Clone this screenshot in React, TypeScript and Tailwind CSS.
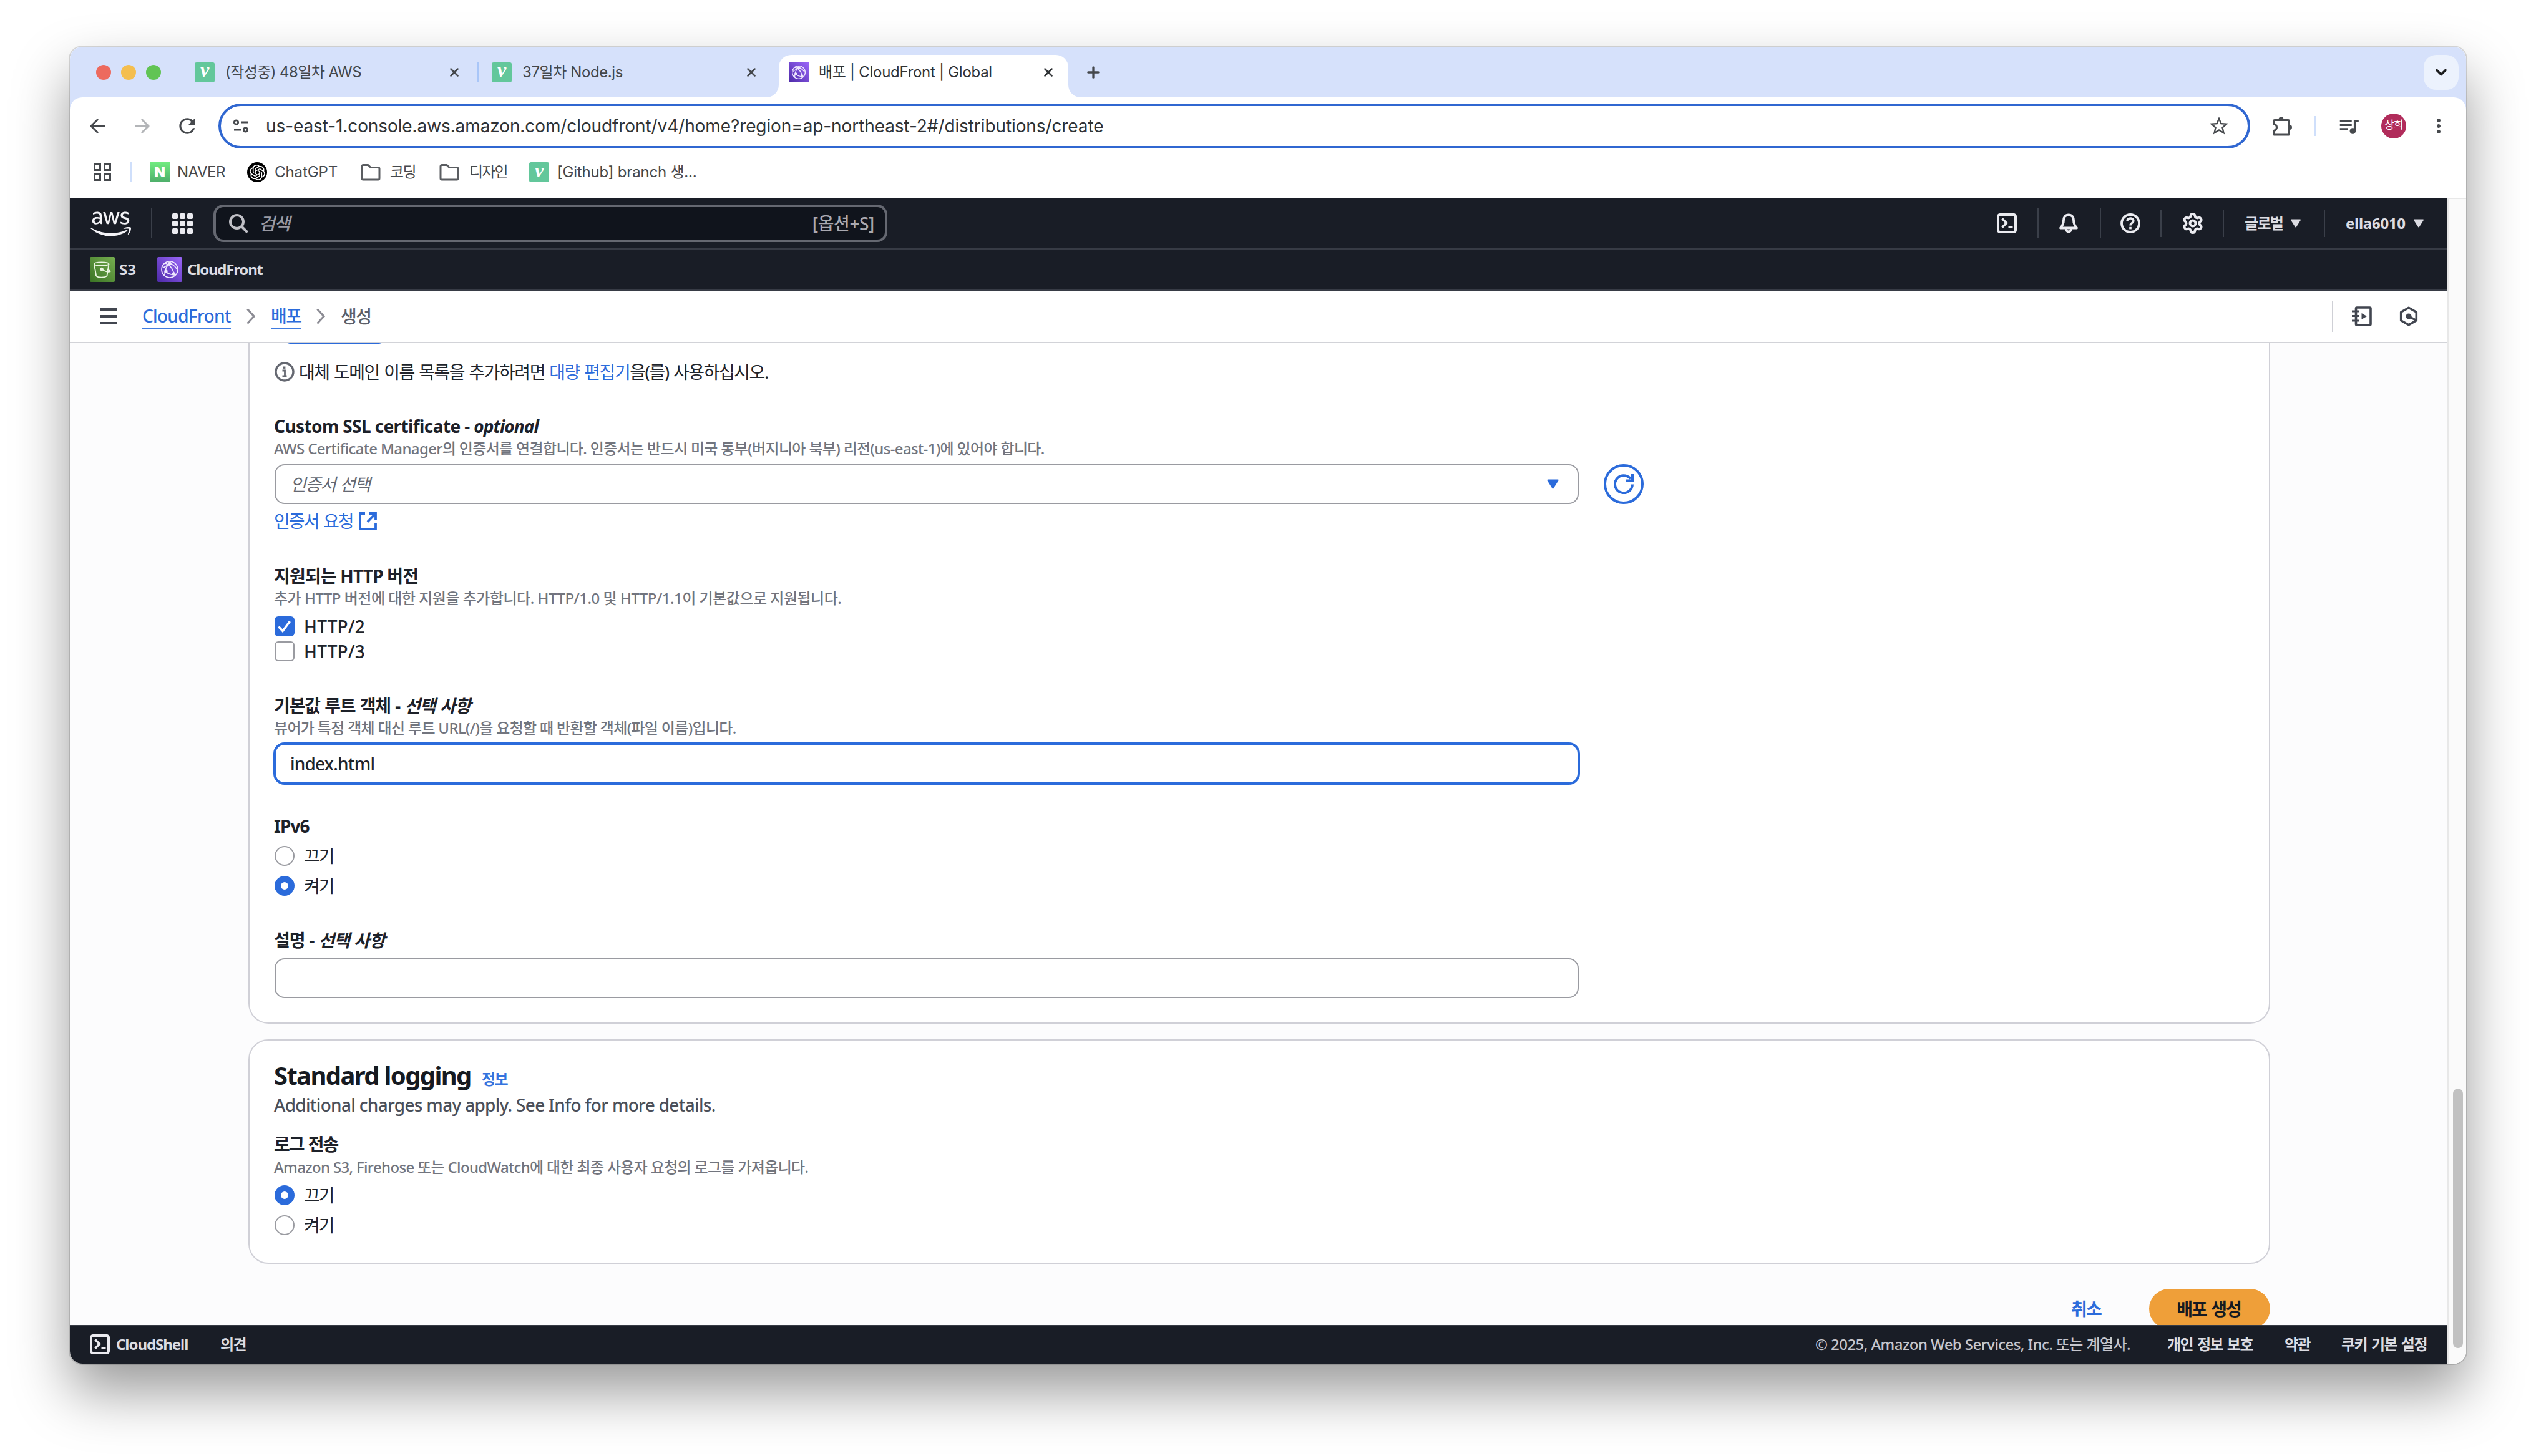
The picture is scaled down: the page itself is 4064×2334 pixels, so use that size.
import type { ReactNode } from "react";
import { Plus, Settings, X, ChevronDown } from "lucide-react";
import { FaAws } from "react-icons/fa";
import { SiOpenai } from "react-icons/si";
import { MdArrowBack, MdArrowForward, MdMoreVert, MdQueueMusic, MdRefresh, MdStarBorder } from "react-icons/md";

type KidsProps = { children?: ReactNode; className?: string };

/* ---------- small drawings ---------- */

function VelogIcon({ className = "" }: { className?: string }) {
  return (
    <span className={`flex size-8 shrink-0 items-center justify-center rounded-[3px] bg-[#63c79b] ${className}`}>
      <span className="-mt-[7px] font-['Liberation_Serif',serif] text-[32px] leading-none font-bold text-white italic">v</span>
    </span>
  );
}

function CloudFrontIcon({ className }: { className: string }) {
  return (
    <svg viewBox="0 0 40 40" className={`shrink-0 ${className}`}>
      <defs>
        <linearGradient id="cf" x1="0" y1="1" x2="1" y2="0">
          <stop offset="0" stopColor="#4d2aa8" />
          <stop offset="1" stopColor="#9a66f8" />
        </linearGradient>
      </defs>
      <rect width="40" height="40" fill="url(#cf)" />
      <g fill="none" stroke="#eee6fd" strokeWidth="1.7">
        <circle cx="20" cy="20" r="13" />
        <path d="M12 10c6 1 13 7 15 18M20 10c-5 4-8 11-8 19M9 18c3-3 8-4 11-8M20 10c5 2 9 5 12 10M14 24c4 3 8 5 13 4" />
        <circle cx="20" cy="10.500" r="2" fill="#eee6fd" />
        <circle cx="26.500" cy="27" r="2" fill="#eee6fd" />
        <circle cx="14" cy="23" r="1.800" fill="#eee6fd" />
      </g>
    </svg>
  );
}

function S3Icon() {
  return (
    <svg viewBox="0 0 40 40" className="size-10 shrink-0">
      <defs>
        <linearGradient id="s3" x1="0" y1="1" x2="1" y2="0">
          <stop offset="0" stopColor="#3a7324" />
          <stop offset="1" stopColor="#75ad4f" />
        </linearGradient>
      </defs>
      <rect width="40" height="40" rx="2" fill="url(#s3)" />
      <g fill="none" stroke="#eaf5df" strokeWidth="1.8" strokeLinejoin="round">
        <path d="M7 11c0 5 2.500 12 3 19 2 3.500 15 3.500 17.500 0L30.500 11" />
        <path d="M7 11c0-3.500 23.500-3.500 23.500 0s-23.500 4-23.500 0z" />
        <path d="M19.500 20c5 3 10 4.500 13 3.500-0.500-2-2.500-3-4.500-3.500" />
        <circle cx="19" cy="19.500" r="1.800" fill="#eaf5df" />
      </g>
    </svg>
  );
}

function FolderIcon() {
  return (
    <svg viewBox="0 0 32 32" className="size-8 shrink-0" fill="none" stroke="#5a5d61" strokeWidth="3" strokeLinejoin="round">
      <path d="M2 6.500a2 2 0 0 1 2-2h8l4 4h12a2 2 0 0 1 2 2V26a2 2 0 0 1-2 2H4a2 2 0 0 1-2-2z" />
    </svg>
  );
}

function PuzzleIcon() {
  return (
    <svg viewBox="0 0 33 33" className="size-[33px] shrink-0">
      <path d="M4 6.500h22a1 1 0 0 1 1 1V29a1 1 0 0 1-1 1H4a1 1 0 0 1-1-1v-5.500q4.500-1.500 4.500-5.500T3 12.500v-5a1 1 0 0 1 1-1z" fill="none" stroke="#4a4d51" strokeWidth="3.2" />
      <path d="M10.500 5.500a4 4 0 0 1 8 0zM28 14a4 4 0 0 1 0 8z" fill="#4a4d51" />
    </svg>
  );
}

function TuneIcon() {
  return (
    <svg viewBox="0 0 24 24" className="size-6 shrink-0" fill="none" stroke="#46494d" strokeWidth="2.8">
      <circle cx="4.500" cy="6" r="3.200" />
      <path d="M12 6h11M1 18h11" />
      <circle cx="19.500" cy="18" r="3.200" />
    </svg>
  );
}

function TerminalIcon() {
  return (
    <svg viewBox="0 0 32 32" className="size-8 shrink-0" fill="none" stroke="#ebebf0" strokeWidth="4">
      <rect x="2" y="2" width="28" height="28" rx="3" />
      <path d="M8.500 8.500l7 7-7 7" strokeWidth="3.600" />
      <path d="M18.500 22h7" strokeWidth="3.600" />
    </svg>
  );
}

function BellIcon() {
  return (
    <svg viewBox="0 0 32 32" className="size-8 shrink-0" fill="none" stroke="#ebebf0" strokeWidth="3.8" strokeLinejoin="round">
      <path d="M16 2.500c-5 0-8 3.500-8 8.500 0 6-2 9-5 12.500h26c-3-3.500-5-6.500-5-12.500 0-5-3-8.500-8-8.500z" />
      <path d="M12 25a4 4.500 0 0 0 8 0" />
    </svg>
  );
}

function HelpIcon() {
  return (
    <svg viewBox="0 0 32 32" className="size-8 shrink-0" fill="none" stroke="#ebebf0" strokeWidth="3.8">
      <circle cx="16" cy="16" r="14" />
      <path d="M11 12.500c0-3 2.200-4.500 5-4.500s5 1.500 5 4.200c0 3.300-5 3.300-5 7.300" strokeWidth="3.400" />
      <rect x="14.200" y="21.800" width="3.600" height="3.600" fill="#ebebf0" stroke="none" />
    </svg>
  );
}

function NotebookIcon() {
  return (
    <svg viewBox="0 0 32 32" className="size-8 shrink-0" fill="none" stroke="#424650" strokeWidth="3.6">
      <rect x="6.500" y="2" width="23.500" height="28" rx="1.500" />
      <path d="M0 8h11M0 15.500h11M0 23h11" strokeWidth="3.200" />
      <path d="M15.500 11v10l8.500-5z" fill="#424650" stroke="none" />
    </svg>
  );
}

function HexIcon() {
  return (
    <svg viewBox="0 0 32 32" className="size-8 shrink-0" fill="none" stroke="#424650" strokeWidth="3.6" strokeLinejoin="round">
      <path d="M16 2.200l12.300 7v13.600L16 29.800l-12.300-7V9.200z" />
      <circle cx="16" cy="16" r="4.500" fill="#424650" stroke="none" />
      <path d="M16 16l12 6.500" />
    </svg>
  );
}

function Caret({ className }: { className: string }) {
  return (
    <svg viewBox="0 0 18 14" className={`shrink-0 ${className}`}>
      <path d="M2 1.500h14L9 12.500z" fill="currentColor" stroke="currentColor" strokeWidth="2" strokeLinejoin="round" />
    </svg>
  );
}

function SearchIcon() {
  return (
    <svg viewBox="0 0 31 31" className="size-[31px] shrink-0" fill="none" stroke="#c0c0c6" strokeWidth="4">
      <circle cx="12.500" cy="12.500" r="10.500" />
      <path d="M19.500 19.500l10 10" />
    </svg>
  );
}

function InfoIcon() {
  return (
    <svg viewBox="0 0 32 32" className="size-8 shrink-0" fill="none" stroke="#656871" strokeWidth="3.4">
      <circle cx="16" cy="16" r="14" />
      <path d="M12.500 14h4v9M12.500 23h7" strokeWidth="2.800" />
      <rect x="14" y="7.500" width="3.400" height="3.400" fill="#656871" stroke="none" />
    </svg>
  );
}

function ExternalIcon() {
  return (
    <svg viewBox="0 0 29 29" className="size-[29px] shrink-0" fill="none" stroke="#2b6bdb" strokeWidth="3.8">
      <path d="M10 2H2v25h25V18" />
      <path d="M16.500 2H27v10.500M27 2L14 15.500" />
    </svg>
  );
}

function ChevronRight({ className = "" }: { className?: string }) {
  return (
    <svg viewBox="0 0 14 26" className={`h-[26px] w-[14px] shrink-0 ${className}`} fill="none" stroke="#8c8c94" strokeWidth="3.2">
      <path d="M1.500 1.500L12 13 1.500 24.500" />
    </svg>
  );
}

/* ---------- form pieces ---------- */

function Label({ children, className = "" }: KidsProps) {
  return <div className={`-ml-px h-10 text-[28px] leading-[39px] font-bold whitespace-nowrap text-[#1d2129] ${className}`}>{children}</div>;
}

function Hint({ children, className = "" }: KidsProps) {
  return <div className={`-ml-px h-8 text-[24px] leading-[30px] font-medium whitespace-nowrap text-[#72757e] ${className}`}>{children}</div>;
}

function Radio({ on, children, className = "" }: KidsProps & { on?: boolean }) {
  return (
    <div className={`flex h-10 items-center gap-[15px] text-[28px] leading-10 tracking-[-2px] text-[#20242b] ${className}`}>
      <span className={on ? "size-8 rounded-full border-[10px] border-[#2b6bdb] bg-white" : "size-8 rounded-full border-2 border-[#9a9ba1] bg-white"} />
      {children}
    </div>
  );
}

function Divider({ className = "" }: { className?: string }) {
  return <span className={`w-0.5 shrink-0 bg-[#3a3f49] ${className}`} />;
}

/* ---------- browser chrome ---------- */

function TabStrip() {
  return (
    <div className="flex h-[81px] shrink-0 items-center bg-[#d6e1fb] text-[24px] whitespace-nowrap text-[#44474b]">
      <div className="ml-[42px] flex gap-4">
        <span className="size-6 rounded-full bg-[#ed6a5e]" />
        <span className="size-6 rounded-full bg-[#f4be4f]" />
        <span className="size-6 rounded-full bg-[#61c454]" />
      </div>
      <VelogIcon className="ml-[54px]" />
      <span className="ml-[17px] w-[356px] tracking-[-0.57px]">(작성중) 48일차 AWS</span>
      <X className="size-[22px] shrink-0" strokeWidth={2.8} />
      <span className="ml-[26px] h-8 w-[3px] bg-[#a9c6f8]" />
      <VelogIcon className="ml-5" />
      <span className="ml-[17px] w-[356px] tracking-[-0.41px]">37일차 Node.js</span>
      <X className="size-[22px] shrink-0" strokeWidth={2.8} />
      <div className="relative ml-[33px] flex h-[68px] w-[464px] items-center self-end rounded-t-[20px] bg-white pb-[13px] text-[#303336]">
        <svg viewBox="0 0 20 20" className="absolute bottom-0 -left-5 size-5">
          <path d="M20 0v20H0A20 20 0 0 0 20 0z" fill="#fff" />
        </svg>
        <svg viewBox="0 0 20 20" className="absolute -right-5 bottom-0 size-5">
          <path d="M0 0v20h20A20 20 0 0 1 0 0z" fill="#fff" />
        </svg>
        <CloudFrontIcon className="ml-4 size-8" />
        <span className="ml-4 w-[357px] tracking-[-0.28px]">배포 | CloudFront | Global</span>
        <X className="size-[22px] shrink-0" strokeWidth={2.8} />
      </div>
      <Plus className="ml-[26px] size-[28px]" strokeWidth={2.8} />
      <span className="mr-3 ml-auto flex h-14 w-14 items-center justify-center rounded-[20px] bg-[#ecf2fd] text-[#1b1c1d]">
        <ChevronDown className="size-7" strokeWidth={3.2} />
      </span>
    </div>
  );
}

function Toolbar() {
  return (
    <div className="shrink-0 bg-[#d6e1fb]">
      <div className="flex h-[92px] items-center rounded-t-[20px] bg-white pt-0 text-[#46494d]">
        <MdArrowBack className="ml-[26px] size-9" />
        <MdArrowForward className="ml-9 size-9 text-[#b3b5b8]" />
        <MdRefresh className="ml-[35px] size-[38px]" />
        <div className="ml-[31px] flex h-[72px] w-[3256px] items-center rounded-full border-4 border-[#3067d1] pl-5">
          <TuneIcon />
          <span className="ml-7 text-[28px] tracking-[-0.1px] whitespace-nowrap text-[#303336]">
            us-east-1.console.aws.amazon.com/cloudfront/v4/home?region=ap-northeast-2#/distributions/create
          </span>
          <MdStarBorder className="mr-[28px] ml-auto size-9" />
        </div>
        <span className="ml-[35px]">
          <PuzzleIcon />
        </span>
        <span className="ml-[34px] h-8 w-[3px] bg-[#cfdffb]" />
        <MdQueueMusic className="ml-[34px] size-[38px]" />
        <span className="ml-[33px] flex size-10 items-center justify-center rounded-full bg-[#b12c5b] pb-0.5 text-[17px] tracking-[-1px] text-white">상희</span>
        <MdMoreVert className="ml-[34px] size-9" />
      </div>
      <div className="flex h-[70px] items-start bg-white pt-3 text-[24px] leading-8 whitespace-nowrap text-[#46494d]">
        <div className="mt-0.5 ml-[38px] grid grid-cols-2 gap-1">
          <span className="size-3 border-[3px]" />
          <span className="size-3 border-[3px]" />
          <span className="size-3 border-[3px]" />
          <span className="size-3 border-[3px]" />
        </div>
        <span className="ml-[31px] h-8 w-[3px] bg-[#cfdffb]" />
        <span className="ml-[28px] flex size-8 items-center justify-center bg-linear-to-b from-[#71ec80] to-[#4eae6a] font-['Inter'] text-[23px] font-black text-white">N</span>
        <span className="ml-[12px] w-[112px] tracking-[-0.5px]">NAVER</span>
        <span className="flex size-8 items-center justify-center rounded-full bg-black text-white">
          <SiOpenai className="size-[25px]" />
        </span>
        <span className="ml-3 w-[138px] tracking-[-0.1px]">ChatGPT</span>
        <FolderIcon />
        <span className="ml-[15px] w-[79px] tracking-[-1.6px]">코딩</span>
        <FolderIcon />
        <span className="ml-[16px] w-[96px] tracking-[-1.8px]">디자인</span>
        <VelogIcon />
        <span className="ml-[13px] tracking-[-0.2px]">[Github] branch 생...</span>
      </div>
    </div>
  );
}

/* ---------- AWS console ---------- */

function AwsHeader() {
  return (
    <div className="shrink-0 bg-[#191d26] font-bold text-[#dcdce2]">
      <div className="flex h-20 items-center">
        <FaAws className="mt-px ml-[33px] h-[52px] w-[65px] shrink-0 text-[#f3f3f7]" />
        <Divider className="ml-[32px] h-12" />
        <div className="ml-8 grid grid-cols-3 gap-[3px]">
          {Array.from({ length: 9 }, (_, i) => (
            <span key={i} className="size-[9px] rounded-[2px] bg-[#ebebf0]" />
          ))}
        </div>
        <div className="ml-[33px] flex h-[60px] w-[1080px] items-center rounded-2xl border-4 border-[#656871] bg-[#10141c] pl-[21px] text-[28px] font-medium text-[#a9a9b1]">
          <SearchIcon />
          <span className="ml-[17px] tracking-[-1.2px] text-[#9a9aa3] italic">검색</span>
          <span className="mr-[17px] ml-auto tracking-[-0.37px]">[옵션+S]</span>
        </div>
        <div className="mr-[37px] ml-auto flex items-center text-[24px]">
          <TerminalIcon />
          <Divider className="ml-[33px] h-12" />
          <span className="ml-8">
            <BellIcon />
          </span>
          <Divider className="ml-[34px] h-12" />
          <span className="ml-[31px]">
            <HelpIcon />
          </span>
          <Divider className="ml-[32px] h-11" />
          <Settings className="ml-[32px] size-9 shrink-0 text-[#ebebf0]" strokeWidth={2.6} />
          <Divider className="ml-[30px] h-11" />
          <span className="ml-[33px] w-[73px] tracking-[-1.7px]">글로벌</span>
          <Caret className="h-[14px] w-[18px]" />
          <Divider className="ml-[36px] h-11" />
          <span className="ml-[33px] w-[108px] tracking-[-0.27px]">ella6010</span>
          <Caret className="h-[14px] w-[18px]" />
        </div>
      </div>
      <div className="flex h-[68px] items-center border-y-2 border-y-[#373b45] pl-8 text-[24px] leading-8">
        <S3Icon />
        <span className="ml-[7px] w-[61px]">S3</span>
        <CloudFrontIcon className="size-10 rounded-[2px]" />
        <span className="ml-2 tracking-[-1.2px]">CloudFront</span>
      </div>
    </div>
  );
}

function Breadcrumbs() {
  return (
    <div className="flex h-[84px] shrink-0 items-center border-b-2 border-[#d2d3d8] bg-white text-[28px] leading-[38px] font-medium whitespace-nowrap text-[#5c5f69]">
      <div className="ml-12 flex w-7 flex-col gap-[7px]">
        <span className="h-1 bg-[#424650]" />
        <span className="h-1 bg-[#424650]" />
        <span className="h-1 bg-[#424650]" />
      </div>
      <span className="ml-10 w-[142px] border-b-2 border-[#3f7be0] tracking-[-0.7px] text-[#2b6bdb]">CloudFront</span>
      <ChevronRight className="ml-[25px]" />
      <span className="ml-[25px] w-12 border-b-2 border-[#3f7be0] tracking-[-1.6px] text-[#2b6bdb]">배포</span>
      <ChevronRight className="ml-[25px]" />
      <span className="ml-[25px] tracking-[-1.6px]">생성</span>
      <span className="ml-auto h-[50px] w-0.5 bg-[#cfd0d6]" />
      <span className="ml-[30px]">
        <NotebookIcon />
      </span>
      <span className="mr-[46px] ml-[43px]">
        <HexIcon />
      </span>
    </div>
  );
}

function SettingsCard() {
  return (
    <section className="rounded-b-[32px] border-2 border-t-0 border-[#d0d0d7] bg-white pr-10 pb-[39px] pl-10">
      <div className="-mt-[62px] h-16 w-[192px] rounded-full border-4 border-[#2b6bdb]" />
      <div className="mt-6 flex h-10 items-center text-[28px] leading-10 tracking-[-1.45px] [word-spacing:1.5px] whitespace-nowrap text-[#20242b]">
        <InfoIcon />
        <span className="ml-[7px]">
          대체 도메인 이름 목록을 추가하려면 <span className="text-[#2b6bdb]">대량 편집기</span>을(를) 사용하십시오.
        </span>
      </div>

      <Label className="mt-12 tracking-[-0.6px]">
        Custom SSL certificate - <span className="tracking-[-0.95px] italic">optional</span>
      </Label>
      <Hint className="tracking-[-0.65px]">
        AWS Certificate Manager의 인증서를 연결합니다. 인증서는 반드시 미국 동부(버지니아 북부) 리전(us-east-1)에 있어야 합니다.
      </Hint>
      <div className="mt-2 flex">
        <div className="flex h-16 w-[2090px] items-center rounded-2xl border-2 border-[#9a9ba1] pr-[29px] pl-[23px] text-[28px] tracking-[-1.8px] [word-spacing:2px] text-[#656871]">
          <span className="italic">인증서 선택</span>
          <Caret className="ml-auto h-4 w-[21px] text-[#2b6bdb]" />
        </div>
        <div className="ml-10 flex size-16 items-center justify-center rounded-full border-4 border-[#2b6bdb]">
          <svg viewBox="0 0 32 32" className="size-8" fill="none" stroke="#2b6bdb" strokeWidth="4">
            <path d="M30 16.500A14 14 0 1 1 27 7.500" />
            <path d="M30 0v10.500H20" />
          </svg>
        </div>
      </div>
      <div className="mt-[7px] flex h-10 items-center text-[28px] tracking-[-1.9px] [word-spacing:2px] text-[#2b6bdb]">
        <span className="mr-[11px] -ml-px w-[125px] whitespace-nowrap">인증서 요청</span>
        <ExternalIcon />
      </div>

      <Label className="mt-[49px] tracking-[-0.8px]">지원되는 HTTP 버전</Label>
      <Hint className="tracking-[-0.49px]">추가 HTTP 버전에 대한 지원을 추가합니다. HTTP/1.0 및 HTTP/1.1이 기본값으로 지원됩니다.</Hint>
      <div className="mt-2 flex h-10 items-center gap-[15px] text-[28px] font-medium tracking-[0.2px] text-[#20242b]">
        <span className="flex size-8 items-center justify-center rounded-md bg-[#2b6bdb]">
          <svg viewBox="0 0 32 32" className="size-8" fill="none" stroke="#fff" strokeWidth="3.6">
            <path d="M6.500 16.500l6.500 7L24.500 8" />
          </svg>
        </span>
        HTTP/2
      </div>
      <div className="flex h-10 items-center gap-[15px] text-[28px] font-medium tracking-[0.2px] text-[#20242b]">
        <span className="size-8 rounded-md border-2 border-[#9a9ba1]" />
        HTTP/3
      </div>

      <Label className="mt-12 tracking-[-1.1px] [word-spacing:1px]">
        기본값 루트 객체 - <span className="italic">선택 사항</span>
      </Label>
      <Hint className="tracking-[-0.67px]">뷰어가 특정 객체 대신 루트 URL(/)을 요청할 때 반환할 객체(파일 이름)입니다.</Hint>
      <div className="mt-1.5 -ml-0.5 flex h-[68px] w-[2094px] items-center rounded-[18px] border-4 border-[#2b6bdb] pl-[23px] text-[28px] font-medium tracking-[-0.8px] text-[#20242b]">
        index.html
      </div>

      <Label className="mt-[47px] tracking-[-0.9px]">IPv6</Label>
      <Radio className="mt-[7px]">끄기</Radio>
      <Radio className="mt-2" on>
        켜기
      </Radio>

      <Label className="mt-12 tracking-[-1.1px] [word-spacing:1px]">
        설명 - <span className="italic">선택 사항</span>
      </Label>
      <div className="mt-2 h-16 w-[2090px] rounded-2xl border-2 border-[#9a9ba1]" />
    </section>
  );
}

function LoggingCard() {
  return (
    <section className="mt-[25px] rounded-[32px] border-2 border-[#d0d0d7] bg-white px-10 pt-8 pb-10 whitespace-nowrap">
      <div className="flex h-12 items-baseline text-[40px] leading-[47px] font-bold text-[#161a21]">
        <span className="-ml-px w-[315px] tracking-[-1.65px]">Standard logging</span>
        <span className="ml-[18px] text-[24px] tracking-[-1.6px] text-[#3573de]">정보</span>
      </div>
      <div className="mt-[3px] -ml-px h-10 text-[28px] leading-10 font-medium tracking-[-0.7px] text-[#4b4f59]">
        Additional charges may apply. See Info for more details.
      </div>
      <Label className="mt-6 tracking-[-2px] [word-spacing:2px]">로그 전송</Label>
      <Hint className="mt-px tracking-[-0.66px]">Amazon S3, Firehose 또는 CloudWatch에 대한 최종 사용자 요청의 로그를 가져옵니다.</Hint>
      <Radio className="mt-2" on>
        끄기
      </Radio>
      <Radio className="mt-2">켜기</Radio>
    </section>
  );
}

function Footer() {
  return (
    <div className="flex h-[62px] shrink-0 items-center border-t-2 border-[#373b45] bg-[#191d26] pb-0.5 pl-8 text-[24px] font-bold whitespace-nowrap text-[#dcdce2]">
      <TerminalIcon />
      <span className="ml-[10px] w-[167px] tracking-[-1.05px]">CloudShell</span>
      <span className="tracking-[-1.6px]">의견</span>
      <span className="ml-auto w-[564px] font-medium tracking-[-0.56px] text-[#c6c6cd]">© 2025, Amazon Web Services, Inc. 또는 계열사.</span>
      <span className="w-[188px] tracking-[-1.5px] [word-spacing:2px]">개인 정보 보호</span>
      <span className="w-[91px] tracking-[-1.6px]">약관</span>
      <span className="w-[170px] tracking-[-1.5px] [word-spacing:2px]">쿠키 기본 설정</span>
    </div>
  );
}

export default function App() {
  return (
    <div className="h-[2334px] w-[4064px] overflow-hidden bg-white pt-[75px] pl-28 font-['Inter','Noto_Sans_CJK_KR',sans-serif]">
      <div className="h-[2111px] w-[3840px] rounded-[20px] shadow-[0_45px_90px_rgba(0,0,0,0.4),0_0_0_2px_rgba(0,0,0,0.14)]">
        <div className="flex h-full flex-col overflow-hidden rounded-[20px] bg-white">
          <TabStrip />
          <Toolbar />
          <div className="flex min-h-0 flex-1">
            <div className="flex w-[3810px] flex-col font-['Noto_Sans','Noto_Sans_CJK_KR',sans-serif]">
              <AwsHeader />
              <Breadcrumbs />
              <main className="min-h-0 flex-1 overflow-hidden bg-[#fcfcfd] pr-[284px] pl-[286px]">
                <SettingsCard />
                <LoggingCard />
                <div className="mt-10 flex h-16 items-center justify-end text-[28px] font-bold whitespace-nowrap">
                  <span className="tracking-[-1.7px] text-[#2b6bdb]">취소</span>
                  <span className="ml-[77px] flex h-16 w-[194px] items-center justify-center rounded-full bg-[#ef9f39] pr-[3px] tracking-[-2px] [word-spacing:2px] text-[#161a21]">배포 생성</span>
                </div>
              </main>
              <Footer />
            </div>
            <div className="w-[30px] border-t border-l-2 border-[#e8e8e8] bg-[#fafafa] pt-[1426px] pl-[7px]">
              <div className="h-[416px] w-4 rounded-full bg-[#c1c1c1]" />
            </div>
          </div>
        </div>
      </div>
    </div>
  );
}
